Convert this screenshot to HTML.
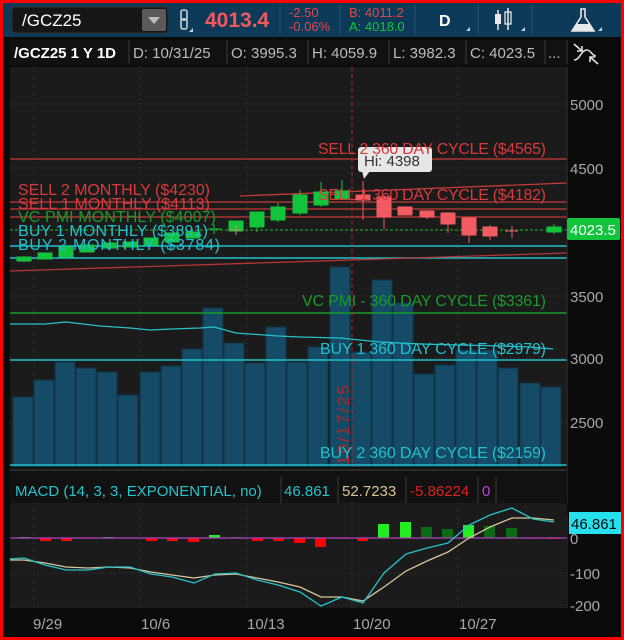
<!DOCTYPE html>
<html><head><meta charset="utf-8"><style>
html,body{margin:0;padding:0;background:#ff0000;}
body{width:624px;height:640px;overflow:hidden;position:relative;font-family:"Liberation Sans",sans-serif;}
svg{position:absolute;left:0;top:0;}
</style></head><body>
<svg width="624" height="640" viewBox="0 0 624 640" xmlns="http://www.w3.org/2000/svg" font-family="Liberation Sans, sans-serif">
<rect x="0" y="0" width="624" height="640" fill="#ff0000"/>
<rect x="3" y="3" width="618" height="634" fill="#0b0b0b"/>
<rect x="3" y="3" width="618" height="34" fill="#0c3a58"/>
<rect x="12" y="7" width="156" height="26" rx="3" fill="#161616" stroke="#333" stroke-width="1"/>
<text x="22" y="26" font-size="17" fill="#ffffff">/GCZ25</text>
<rect x="142" y="9" width="24" height="22" rx="2" fill="#5a5a5a"/>
<path d="M148 17 L160 17 L154 24 Z" fill="#bdbdbd"/>
<rect x="181" y="10" width="6" height="10" rx="2" fill="none" stroke="#c9d3da" stroke-width="1.6"/>
<rect x="181" y="19" width="6" height="10" rx="2" fill="none" stroke="#c9d3da" stroke-width="1.6"/>
<path d="M189 32 L193 32 L193 28 Z" fill="#c9d3da"/>
<text x="205" y="27" font-size="21" font-weight="bold" fill="#f05a5f">4013.4</text>
<line x1="280" y1="5" x2="280" y2="35" stroke="#1e5378"/>
<text x="289" y="17" font-size="13" fill="#e0484e">-2.50</text>
<text x="289" y="31" font-size="13" fill="#e0484e">-0.06%</text>
<line x1="340" y1="5" x2="340" y2="35" stroke="#1e5378"/>
<text x="349" y="17" font-size="13" fill="#e0484e">B: 4011.2</text>
<text x="349" y="31" font-size="13" fill="#12c43c">A: 4018.0</text>
<line x1="415" y1="5" x2="415" y2="35" stroke="#1e5378"/>
<text x="439" y="26" font-size="16" font-weight="bold" fill="#ffffff">D</text>
<path d="M466 31 L470 31 L470 27 Z" fill="#c9d3da"/>
<line x1="478" y1="5" x2="478" y2="35" stroke="#1e5378"/>
<line x1="498" y1="10" x2="498" y2="30" stroke="#e8e8e8" stroke-width="1.5"/>
<rect x="495" y="14" width="6" height="10" fill="#e8e8e8"/>
<line x1="508" y1="8" x2="508" y2="30" stroke="#e8e8e8" stroke-width="1.5"/>
<rect x="505" y="12" width="6" height="12" fill="none" stroke="#e8e8e8" stroke-width="1.3"/>
<path d="M521 31 L525 31 L525 27 Z" fill="#c9d3da"/>
<line x1="532" y1="5" x2="532" y2="35" stroke="#1e5378"/>
<path d="M581 9 L581 17 L572 31 L594 31 L585 17 L585 9 Z" fill="none" stroke="#e8e8e8" stroke-width="1.6"/>
<path d="M576 24 L590 24 L594 31 L572 31 Z" fill="#e8e8e8"/>
<path d="M598 31 L602 31 L602 27 Z" fill="#c9d3da"/>
<rect x="3" y="37" width="618" height="28" fill="#0b0b0b"/>
<rect x="10" y="40" width="557" height="25" fill="#111"/>
<text x="14" y="58" font-size="15" font-weight="bold" fill="#ffffff">/GCZ25 1 Y 1D</text>
<g stroke="#3a3a3a"><line x1="129" y1="40" x2="129" y2="64"/><line x1="227" y1="40" x2="227" y2="64"/><line x1="308" y1="40" x2="308" y2="64"/><line x1="389" y1="40" x2="389" y2="64"/><line x1="466" y1="40" x2="466" y2="64"/><line x1="545" y1="40" x2="545" y2="64"/><line x1="567" y1="40" x2="567" y2="64"/></g>
<g font-size="15" fill="#bdbdbd"><text x="133" y="58">D: 10/31/25</text><text x="231" y="58">O: 3995.3</text><text x="312" y="58">H: 4059.9</text><text x="393" y="58">L: 3982.3</text><text x="470" y="58">C: 4023.5</text><text x="548" y="58">...</text></g>
<g stroke="#e0e0e0" stroke-width="1.6" fill="none"><path d="M574 44 L582 51 M582 46 L582 51 L577 51"/><path d="M574 60 C580 60 581 50 587 50 C591 50 592 56 596 56"/><path d="M598 64 L590 57 M590 62 L590 57 L595 57"/></g>
<rect x="10" y="67" width="557" height="400" fill="#1b1b1b"/>
<g stroke="#3c3c3c" stroke-dasharray="1,3"><line x1="34" y1="67" x2="34" y2="467"/><line x1="140" y1="67" x2="140" y2="467"/><line x1="247" y1="67" x2="247" y2="467"/><line x1="458" y1="67" x2="458" y2="467"/>
<line x1="10" y1="104" x2="567" y2="104"/><line x1="10" y1="168" x2="567" y2="168"/><line x1="10" y1="296" x2="567" y2="296"/><line x1="10" y1="358" x2="567" y2="358"/><line x1="10" y1="422" x2="567" y2="422"/></g>
<g fill="#154b66" stroke="#0f3347" stroke-width="1">
<rect x="13" y="397" width="20" height="70"/><rect x="34" y="380" width="20" height="87"/><rect x="55" y="362" width="20" height="105"/><rect x="76" y="368" width="20" height="99"/><rect x="97" y="372" width="20" height="95"/><rect x="118" y="395" width="20" height="72"/><rect x="140" y="372" width="20" height="95"/><rect x="161" y="366" width="20" height="101"/><rect x="182" y="349" width="20" height="118"/><rect x="203" y="308" width="20" height="159"/><rect x="224" y="343" width="20" height="124"/><rect x="245" y="363" width="20" height="104"/><rect x="266" y="327" width="20" height="140"/><rect x="287" y="362" width="20" height="105"/><rect x="308" y="347" width="20" height="120"/><rect x="330" y="267" width="20" height="200"/><rect x="351" y="352" width="20" height="115"/><rect x="372" y="280" width="20" height="187"/><rect x="393" y="303" width="20" height="164"/><rect x="414" y="374" width="20" height="93"/><rect x="435" y="365" width="20" height="102"/><rect x="456" y="350" width="20" height="117"/><rect x="477" y="350" width="20" height="117"/><rect x="498" y="368" width="20" height="99"/><rect x="520" y="383" width="20" height="84"/><rect x="541" y="387" width="20" height="80"/>
</g>
<polyline fill="none" stroke="#27c2cc" stroke-width="1.3" points="10,324 45,324 66,322 100,326 130,328 150,330 172,329 200,328 214,327 236,333 278,336 300,337 340,338 380,342 420,344 460,345 500,346 530,347 553,349"/>
<line x1="10" y1="159" x2="567" y2="159" stroke="#c53a3a" stroke-width="1.3"/>
<line x1="240" y1="196" x2="567" y2="183" stroke="#c53a3a" stroke-width="1.3"/>
<line x1="10" y1="202" x2="567" y2="202" stroke="#c53a3a" stroke-width="1.3"/>
<line x1="10" y1="209" x2="567" y2="209" stroke="#c53a3a" stroke-width="1.3"/>
<line x1="10" y1="217" x2="567" y2="217" stroke="#c53a3a" stroke-width="1.3"/>
<line x1="10" y1="230" x2="567" y2="230" stroke="#1a9a2a" stroke-width="1.3" stroke-dasharray="3,2"/>
<line x1="10" y1="246" x2="567" y2="246" stroke="#21c0cc" stroke-width="1.5"/>
<line x1="10" y1="258" x2="567" y2="258" stroke="#21c0cc" stroke-width="1.5"/>
<line x1="10" y1="271" x2="567" y2="253" stroke="#b73535" stroke-width="1.3"/>
<line x1="10" y1="313" x2="567" y2="313" stroke="#1a9a2a" stroke-width="1.5"/>
<line x1="10" y1="360" x2="567" y2="360" stroke="#21c0cc" stroke-width="1.5"/>
<line x1="10" y1="465" x2="567" y2="465" stroke="#21c0cc" stroke-width="1.5"/>
<line x1="352" y1="67" x2="352" y2="467" stroke="#b02a2a" stroke-width="1" stroke-dasharray="4,3"/>
<text transform="translate(349,465) rotate(-90)" font-size="17" textLength="80" fill="#a82a2a">10/17/25</text>
<g stroke-width="1">
<g fill="#12c43c" stroke="#12c43c">
<line x1="24" y1="256" x2="24" y2="262"/><rect x="17" y="257" width="14" height="4"/>
<rect x="38" y="253" width="14" height="6"/>
<rect x="59" y="247" width="14" height="10"/>
<rect x="80" y="245" width="14" height="7"/>
<rect x="102" y="243" width="14" height="5"/>
<rect x="123" y="242" width="14" height="5"/>
<rect x="144" y="238" width="14" height="7"/>
<rect x="165" y="233" width="14" height="9"/>
<rect x="186" y="232" width="14" height="6"/>
<line x1="214" y1="224" x2="214" y2="234"/><line x1="208" y1="229" x2="221" y2="229"/>
<line x1="257" y1="216" x2="257" y2="232"/><rect x="229" y="221" width="14" height="10"/>
<rect x="250" y="212" width="14" height="15"/>
<line x1="278" y1="203" x2="278" y2="222"/><rect x="271" y="207" width="14" height="13"/>
<line x1="300" y1="190" x2="300" y2="215"/><rect x="293" y="195" width="14" height="18"/>
<line x1="321" y1="182" x2="321" y2="207"/><rect x="314" y="192" width="14" height="13"/>
<line x1="342" y1="180" x2="342" y2="192"/><rect x="335" y="191" width="14" height="8"/>
<line x1="554" y1="224" x2="554" y2="234"/><rect x="547" y="227" width="14" height="5"/>
</g>
<line x1="236" y1="225" x2="236" y2="235" stroke="#c08c6a"/><line x1="229" y1="230" x2="242" y2="230" stroke="#c08c6a"/>
<g fill="#f25c60" stroke="#f25c60">
<line x1="363" y1="181" x2="363" y2="220"/><rect x="356" y="195" width="14" height="5"/>
<line x1="384" y1="195" x2="384" y2="229"/><rect x="377" y="197" width="14" height="20"/>
<rect x="398" y="207" width="14" height="8"/>
<line x1="427" y1="210" x2="427" y2="219"/><rect x="420" y="211" width="14" height="6"/>
<line x1="448" y1="212" x2="448" y2="233"/><rect x="441" y="213" width="14" height="11"/>
<line x1="469" y1="217" x2="469" y2="243"/><rect x="462" y="218" width="14" height="17"/>
<line x1="490" y1="225" x2="490" y2="240"/><rect x="483" y="227" width="14" height="9"/>
<line x1="512" y1="226" x2="512" y2="238"/><line x1="505" y1="231" x2="518" y2="231"/>
</g>
</g>
<rect x="358" y="147" width="74" height="25" rx="3" fill="#e6e6e6"/>
<path d="M362 171 L364 179 L370 171 Z" fill="#e6e6e6"/>
<text x="364" y="166" font-size="15" fill="#333">Hi: 4398</text>
<g font-size="16">
<text x="546" y="154" text-anchor="end" textLength="228" fill="#d8393c">SELL 2 360 DAY CYCLE ($4565)</text>
<text x="546" y="200" text-anchor="end" textLength="228" fill="#d8393c">SELL 1 360 DAY CYCLE ($4182)</text>
<text x="18" y="195" textLength="192" fill="#d8393c">SELL 2 MONTHLY ($4230)</text>
<text x="18" y="209" textLength="192" fill="#d8393c">SELL 1 MONTHLY ($4113)</text>
<text x="18" y="222" textLength="198" fill="#1a9a2a">VC PMI MONTHLY ($4007)</text>
<text x="18" y="236" textLength="190" fill="#21c0cc">BUY 1 MONTHLY ($3891)</text>
<text x="18" y="250" textLength="202" fill="#21c0cc">BUY 2 MONTHLY ($3784)</text>
<text x="546" y="306" text-anchor="end" textLength="244" fill="#1a9a2a">VC PMI - 360 DAY CYCLE ($3361)</text>
<text x="546" y="354" text-anchor="end" textLength="226" fill="#21c0cc">BUY 1 360 DAY CYCLE ($2979)</text>
<text x="546" y="458" text-anchor="end" textLength="226" fill="#21c0cc">BUY 2 360 DAY CYCLE ($2159)</text>
</g>
<line x1="567" y1="67" x2="567" y2="608" stroke="#333"/>
<g font-size="15" fill="#a8a8a8"><text x="570" y="110">5000</text><text x="570" y="174">4500</text><text x="570" y="302">3500</text><text x="570" y="364">3000</text><text x="570" y="428">2500</text></g>
<rect x="567" y="218" width="53" height="22" rx="2" fill="#12c43c"/>
<text x="570" y="235" font-size="15" fill="#ffffff">4023.5</text>
<rect x="10" y="467" width="557" height="10" fill="#111"/>
<line x1="10" y1="470" x2="567" y2="470" stroke="#444"/>
<rect x="10" y="477" width="557" height="26" fill="#111"/>
<g stroke="#3a3a3a"><line x1="281" y1="477" x2="281" y2="503"/><line x1="338" y1="477" x2="338" y2="503"/><line x1="406" y1="477" x2="406" y2="503"/><line x1="478" y1="477" x2="478" y2="503"/><line x1="496" y1="477" x2="496" y2="503"/></g>
<g font-size="15"><text x="15" y="496" fill="#27c2cc">MACD (14, 3, 3, EXPONENTIAL, no)</text><text x="284" y="496" fill="#27c2cc">46.861</text><text x="342" y="496" fill="#d8c69a">52.7233</text><text x="410" y="496" fill="#e02020">-5.86224</text><text x="482" y="496" fill="#c040e0">0</text></g>
<rect x="10" y="503" width="557" height="105" fill="#1b1b1b"/>
<g stroke="#3c3c3c" stroke-dasharray="1,3"><line x1="34" y1="503" x2="34" y2="608"/><line x1="140" y1="503" x2="140" y2="608"/><line x1="247" y1="503" x2="247" y2="608"/><line x1="352" y1="503" x2="352" y2="608"/><line x1="458" y1="503" x2="458" y2="608"/><line x1="10" y1="573" x2="567" y2="573"/><line x1="10" y1="605" x2="567" y2="605"/></g>
<g>
<rect x="19" y="537" width="11" height="1" fill="#12c43c"/>
<rect x="40" y="538" width="11" height="3" fill="#f00"/>
<rect x="61" y="538" width="11" height="3" fill="#f00"/>
<rect x="82" y="538" width="11" height="1" fill="#8b0000"/>
<rect x="103" y="537" width="11" height="1" fill="#12c43c"/>
<rect x="146" y="538" width="11" height="3" fill="#f00"/>
<rect x="167" y="538" width="11" height="3" fill="#f00"/>
<rect x="188" y="538" width="11" height="4" fill="#f00"/>
<rect x="209" y="535" width="11" height="3" fill="#22ee22"/>
<rect x="230" y="537" width="11" height="1" fill="#0a6b14"/>
<rect x="252" y="538" width="11" height="3" fill="#f00"/>
<rect x="273" y="538" width="11" height="3" fill="#f00"/>
<rect x="294" y="538" width="11" height="5" fill="#f00"/>
<rect x="315" y="538" width="11" height="9" fill="#f00"/>
<rect x="336" y="538" width="11" height="1" fill="#8b0000"/>
<rect x="357" y="538" width="11" height="3" fill="#f00"/>
<rect x="378" y="524" width="11" height="14" fill="#22ee22"/>
<rect x="400" y="522" width="11" height="16" fill="#22ee22"/>
<rect x="421" y="527" width="11" height="11" fill="#0a6b14"/>
<rect x="442" y="529" width="11" height="9" fill="#0a6b14"/>
<rect x="463" y="525" width="11" height="13" fill="#22ee22"/>
<rect x="484" y="526" width="11" height="12" fill="#0a6b14"/>
<rect x="506" y="528" width="11" height="10" fill="#0a6b14"/>
<rect x="527" y="538" width="11" height="1" fill="#8b0000"/>
<rect x="548" y="538" width="11" height="1" fill="#f00"/>
</g>
<line x1="10" y1="538" x2="567" y2="538" stroke="#b040c0" stroke-width="1.3"/>
<polyline fill="none" stroke="#d8c69a" stroke-width="1.3" points="10,560 24,560 45,563 66,567 88,568 109,567 130,568 151,572 172,575 194,578 215,575 236,574 257,578 278,582 300,587 321,597 342,597 363,601 384,587 406,571 427,561 448,552 469,538 490,527 512,518 533,518 554,520"/>
<polyline fill="none" stroke="#27c2cc" stroke-width="1.3" points="10,559 24,558 45,565 66,570 88,570 109,567 130,567 151,574 172,577 194,583 215,574 236,573 257,580 278,585 300,592 321,606 342,597 363,603 384,573 406,554 427,548 448,543 469,525 490,515 512,508 533,519 554,522"/>
<g font-size="15" fill="#a8a8a8"><text x="568" y="514">100</text><text x="570" y="544">0</text><text x="570" y="579">-100</text><text x="570" y="611">-200</text></g>
<rect x="567" y="503" width="54" height="10" fill="#0b0b0b"/>
<rect x="569" y="512" width="52" height="22" fill="#27e0ee"/>
<text x="571" y="529" font-size="15" fill="#0b0b0b">46.861</text>
<rect x="10" y="608" width="557" height="29" fill="#0b0b0b"/>
<g font-size="15" fill="#a8a8a8"><text x="33" y="629">9/29</text><text x="141" y="629">10/6</text><text x="247" y="629">10/13</text><text x="353" y="629">10/20</text><text x="459" y="629">10/27</text></g>
</svg>
</body></html>
